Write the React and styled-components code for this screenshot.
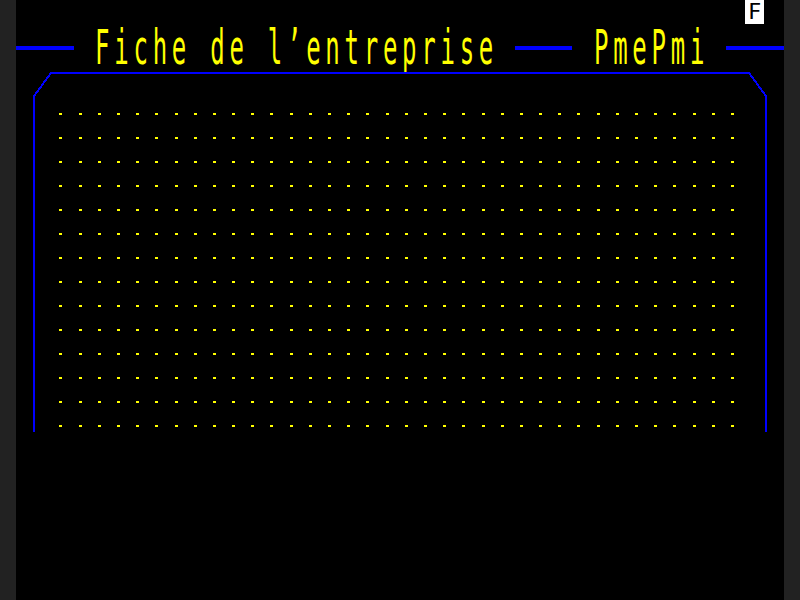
import styled, { createGlobalStyle } from 'styled-components';

const GlobalStyle = createGlobalStyle`
  html, body {
    margin: 0;
    padding: 0;
    background: #222;
  }
`;

const Page = styled.div`
  display: flex;
  justify-content: center;
  width: 800px;
  height: 600px;
  background: #222;
`;

const Screen = styled.div`
  display: flex;
  flex-direction: column;
  width: 768px;
  height: 600px;
  background: #000;
  font-family: 'DejaVu Sans Mono', monospace;
  overflow: hidden;
`;

const Row = styled.div`
  display: grid;
  grid-template-columns: repeat(40, 19.2px);
  height: ${(p) => (p.$double ? 48 : 24)}px;
`;

const StatusCell = styled.div`
  grid-column: 39;
  background: #fff;
  color: #000;
  font-size: 22px;
  line-height: 24px;
  text-align: center;
`;

const Glyph = styled.span`
  display: block;
  height: 24px;
  font-size: 24px;
  line-height: 24px;
  text-align: center;
  color: #ffff00;
  white-space: pre;
  transform: scaleY(2);
  transform-origin: top;
`;

const Bar = styled.span`
  display: block;
  margin-top: 22px;
  height: 4px;
  background: #0000ff;
`;

const Frame = styled.div`
  position: relative;
  height: 360px;
`;

const FrameLine = styled.svg`
  position: absolute;
  inset: 0;
`;

const DotGrid = styled.div`
  display: grid;
  grid-template-columns: repeat(36, 19.2px);
  grid-auto-rows: 24px;
  padding: 24px 0 0 38.4px;
`;

const DotCell = styled.span`
  background: linear-gradient(#ffff00, #ffff00) no-repeat 5px 17px / 3px 2px;
`;

const title = [
  '|', '|', '|', ' ',
  ...'Fiche de l\u2019entreprise'.split(''),
  ' ', '|', '|', '|', ' ',
  ...'PmePmi'.split(''),
  ' ', '|', '|', '|',
];

const App = () => {
  const dots = Array.from({ length: 36 * 14 });
  return (
    <Page>
      <GlobalStyle />
      <Screen>
        <Row>
          <StatusCell>F</StatusCell>
        </Row>
        <Row $double>
          {title.map((c, i) =>
            c === '|' ? <Bar key={i} /> : <Glyph key={i}>{c}</Glyph>
          )}
        </Row>
        <Frame>
          <FrameLine width="768" height="360" viewBox="0 0 768 360">
            <path
              d="M18,360 V24 L35,1 H733 L750,24 V360"
              fill="none"
              stroke="#0000ff"
              strokeWidth="2"
              shapeRendering="crispEdges"
            />
          </FrameLine>
          <DotGrid>
            {dots.map((_, i) => (
              <DotCell key={i} />
            ))}
          </DotGrid>
        </Frame>
      </Screen>
    </Page>
  );
};

export default App;
